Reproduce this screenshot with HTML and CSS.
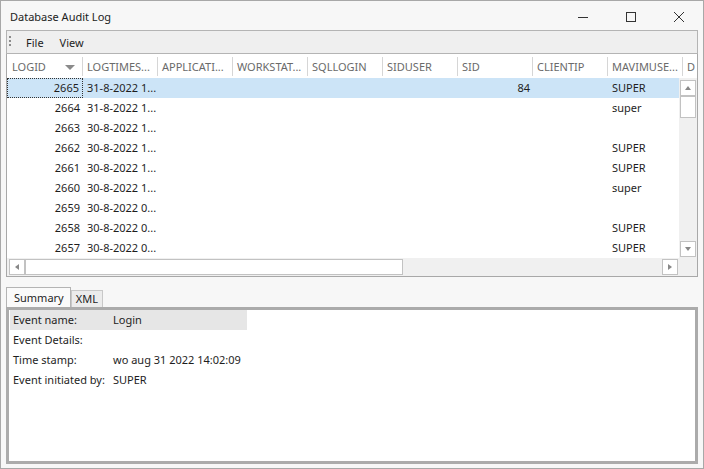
FILE: index.html
```html
<!DOCTYPE html>
<html lang="en">
<head>
<meta charset="UTF-8">
<link rel="stylesheet" href="styles.css">
</head>
<body>
<div class="window">
    <div class="titlebar">
        <span class="title">Database Audit Log</span>
        <div class="controls">
            <span class="ctl"><svg width="12" height="12" viewBox="0 0 12 12"><path d="M1 6.5h10" stroke="#333" stroke-width="1"/></svg></span>
            <span class="ctl"><svg width="12" height="12" viewBox="0 0 12 12"><rect x="1.5" y="1.5" width="9" height="9" fill="none" stroke="#333" stroke-width="1"/></svg></span>
            <span class="ctl"><svg width="12" height="12" viewBox="0 0 12 12"><path d="M1 1L11 11M11 1L1 11" stroke="#333" stroke-width="1"/></svg></span>
        </div>
    </div>

    <div class="menubar">
        <span class="grip"></span>
        <span class="menu-item">File</span>
        <span class="menu-item">View</span>
    </div>

    <div class="grid">
        <div class="grid-head">
            <div class="hcell first">LOGID<span class="sort-arrow"></span></div>
            <div class="hcell">LOGTIMES...</div>
            <div class="hcell">APPLICATI...</div>
            <div class="hcell">WORKSTAT...</div>
            <div class="hcell">SQLLOGIN</div>
            <div class="hcell">SIDUSER</div>
            <div class="hcell">SID</div>
            <div class="hcell">CLIENTIP</div>
            <div class="hcell">MAVIMUSE...</div>
            <div class="hcell last">D</div>
        </div>
        <div class="grid-main">
            <div class="rows" id="rows"></div>
            <div class="vscroll">
                <span class="sbtn"><span class="arr up"></span></span>
                <span class="sbtn vthumb"></span>
                <span class="vtrack"></span>
                <span class="sbtn"><span class="arr down"></span></span>
            </div>
        </div>
        <div class="hscroll-row">
            <div class="hscroll">
                <span class="sbtn"><span class="arr left"></span></span>
                <span class="sbtn hthumb"></span>
                <span class="htrack"></span>
                <span class="sbtn"><span class="arr right"></span></span>
            </div>
            <div class="corner"></div>
        </div>
    </div>

    <div class="tabs">
        <span class="tab active">Summary</span>
        <span class="tab">XML</span>
    </div>

    <div class="panel">
        <div class="summary">
            <div class="srow hl"><span class="lbl">Event name:</span><span>Login</span></div>
            <div class="srow"><span class="lbl">Event Details:</span><span></span></div>
            <div class="srow"><span class="lbl">Time stamp:</span><span>wo aug 31 2022 14:02:09</span></div>
            <div class="srow"><span class="lbl">Event initiated by:</span><span>SUPER</span></div>
        </div>
    </div>
</div>

<script>
// audit rows: id, timestamp, sid, user
const logRows = [
    [2665, '31-8-2022 1...', '84', 'SUPER'],
    [2664, '31-8-2022 1...', '', 'super'],
    [2663, '30-8-2022 1...', '', ''],
    [2662, '30-8-2022 1...', '', 'SUPER'],
    [2661, '30-8-2022 1...', '', 'SUPER'],
    [2660, '30-8-2022 1...', '', 'super'],
    [2659, '30-8-2022 0...', '', ''],
    [2658, '30-8-2022 0...', '', 'SUPER'],
    [2657, '30-8-2022 0...', '', 'SUPER']
];

const rowsEl = document.getElementById('rows');
logRows.forEach((r, i) => {
    const row = document.createElement('div');
    row.className = 'row' + (i === 0 ? ' selected' : '');
    row.innerHTML =
        `<div class="cell num${i === 0 ? ' focus' : ''}">${r[0]}</div>` +
        `<div class="cell">${r[1]}</div>` +
        '<div class="cell"></div><div class="cell"></div><div class="cell"></div><div class="cell"></div>' +
        `<div class="cell num">${r[2]}</div>` +
        '<div class="cell"></div>' +
        `<div class="cell">${r[3]}</div>`;
    rowsEl.appendChild(row);
});
</script>
</body>
</html>
```

FILE: styles.css
```css
* {
    box-sizing: border-box;
}

body {
    margin: 0;
    font-family: "Noto Sans", sans-serif;
    font-size: 11px;
    color: #1e1e1e;
}

.window {
    width: 704px;
    height: 469px;
    border: 1px solid #a8a8a8;
    background: #f7f7f7;
    padding: 0 5px 0 5px;
    display: flex;
    flex-direction: column;
}

.titlebar {
    height: 29px;
    display: flex;
    align-items: center;
    justify-content: space-between;
    margin: 0 -5px;
    padding-left: 9px;
    padding-top: 2px;
}

.title {
    color: #222;
}

.controls {
    display: flex;
    height: 27px;
}

.ctl {
    width: 48px;
    display: flex;
    align-items: center;
    justify-content: center;
}

.menubar {
    height: 24px;
    border: 1px solid #b4b4b4;
    background: #efefef;
    display: flex;
    align-items: center;
    padding-left: 2px;
}

.grip {
    width: 2px;
    height: 12px;
    margin-right: 15px;
    background: repeating-linear-gradient(to bottom, #8c8c8c 0 2px, transparent 2px 4px);
}

.menu-item {
    margin-right: 16px;
}

.grid {
    border: 1px solid #a8a8a8;
    border-top: none;
    background: #fff;
}

.grid-head {
    height: 24px;
    display: flex;
    align-items: center;
    overflow: hidden;
    color: #6a6a6a;
}

.hcell {
    flex: 0 0 75px;
    height: 19px;
    line-height: 19px;
    padding-left: 4px;
    border-right: 1px solid #d6d6d6;
    white-space: nowrap;
    overflow: hidden;
    position: relative;
}

.hcell.first {
    flex-basis: 76px;
    padding-left: 5px;
}

.hcell.last {
    flex: 1;
    border-right: none;
}

.sort-arrow {
    position: absolute;
    right: 7px;
    top: 8px;
    border-left: 5px solid transparent;
    border-right: 5px solid transparent;
    border-top: 5px solid #8a8a8a;
}

.grid-main {
    display: flex;
    height: 180px;
}

.rows {
    flex: 1;
    overflow: hidden;
}

.row {
    height: 20px;
    display: grid;
    grid-template-columns: 76px repeat(8, 75px);
}

.row.selected {
    background: #cce4f7;
}

.cell {
    line-height: 20px;
    padding-left: 4px;
    white-space: nowrap;
    overflow: hidden;
}

.cell.num {
    text-align: right;
    padding-right: 3px;
}

.cell.focus {
    border: 1px dotted #333;
    line-height: 18px;
}

.vscroll {
    width: 18px;
    background: #f0f0f0;
    display: flex;
    flex-direction: column;
    align-items: center;
    padding: 2px 0 1px 0;
}

.sbtn {
    width: 16px;
    height: 16px;
    flex: 0 0 auto;
    background: #fff;
    border: 1px solid #c2c2c2;
    display: flex;
    align-items: center;
    justify-content: center;
}

.vthumb {
    height: 22px;
}

.vtrack,
.htrack {
    flex: 1;
}

.arr {
    width: 0;
    height: 0;
}

.arr.up {
    border-left: 3px solid transparent;
    border-right: 3px solid transparent;
    border-bottom: 4px solid #888;
}

.arr.down {
    border-left: 3px solid transparent;
    border-right: 3px solid transparent;
    border-top: 4px solid #888;
}

.arr.left {
    border-top: 3px solid transparent;
    border-bottom: 3px solid transparent;
    border-right: 4px solid #888;
}

.arr.right {
    border-top: 3px solid transparent;
    border-bottom: 3px solid transparent;
    border-left: 4px solid #888;
}

.hscroll-row {
    display: flex;
    height: 18px;
    background: #f0f0f0;
}

.hscroll {
    flex: 1;
    display: flex;
    align-items: center;
    padding: 0 1px 0 2px;
}

.hthumb {
    width: 378px;
}

.corner {
    width: 18px;
}

.tabs {
    display: flex;
    align-items: flex-end;
    margin-top: 10px;
    height: 20px;
}

.tab {
    height: 17px;
    line-height: 16px;
    padding: 0 4px;
    border: 1px solid #c8c8c8;
    border-bottom: none;
    background: #ececec;
}

.tab.active {
    height: 20px;
    line-height: 19px;
    padding: 0 6px 0 7px;
    border-color: #b4b4b4;
    background: #fafafa;
}

.panel {
    height: 157px;
    border: 3px solid #ababab;
    background: #fff;
}

.summary {
    padding-left: 1px;
}

.srow {
    width: 237px;
    height: 20px;
    line-height: 20px;
    display: flex;
    padding-left: 3px;
    white-space: nowrap;
}

.srow.hl {
    background: #e6e6e6;
}

.lbl {
    width: 100px;
    flex: 0 0 100px;
}
```
